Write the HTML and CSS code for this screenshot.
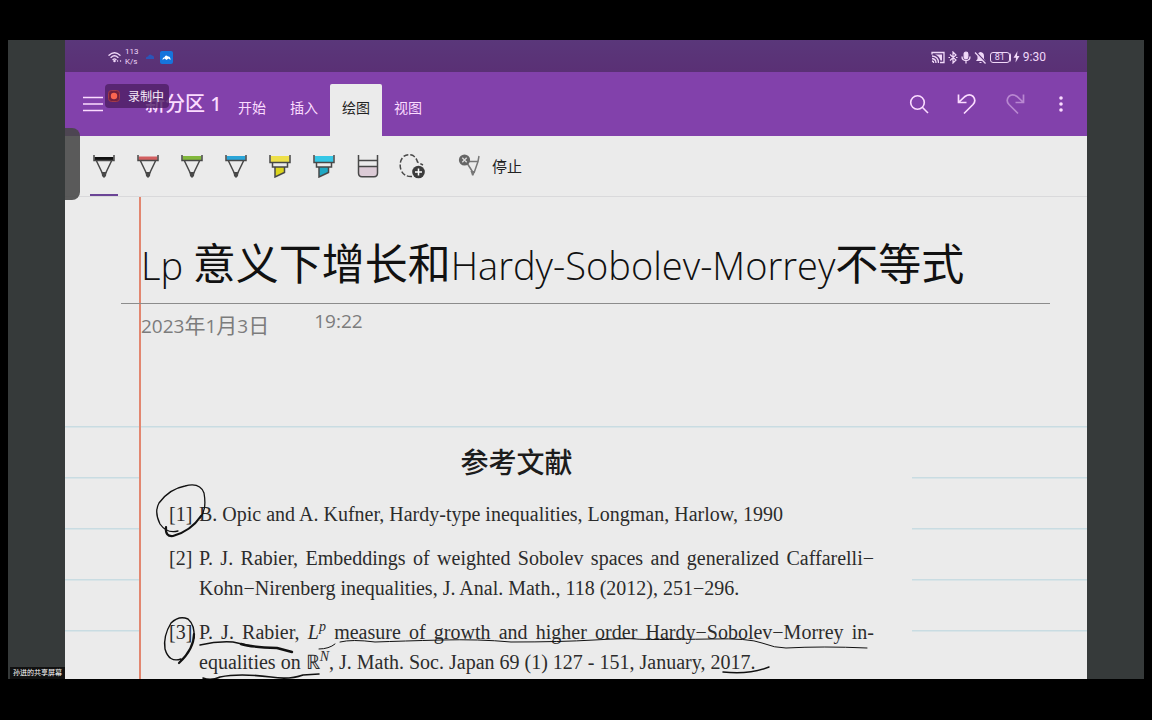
FILE: index.html
```html
<!DOCTYPE html>
<html lang="zh-CN">
<head>
<meta charset="utf-8">
<title>新分区 1</title>
<link rel="stylesheet" href="styles.css">
</head>
<body>
<div class="stage">
  <div class="sharer">孙进的共享屏幕</div>
  <main class="app">
    <div class="status">
      <svg class="wifi" width="14" height="12" viewBox="0 0 14 12" fill="none" stroke="#f0d8f8" stroke-width="1.3" stroke-linecap="round"><path d="M1 4.2Q6.500 -.8 12 4.200M3 6.400Q6.500 3.200 10 6.400M5 8.500Q6.500 7.200 8 8.500"/><circle cx="6.500" cy="10" r=".6" fill="#f0d8f8"/><path d="M9.500 10h.1M12.500 10h.1"/></svg>
      <span class="speed">113<br>K/s</span>
      <svg class="cloud" width="10" height="8" viewBox="0 0 10 8"><path d="M1 6Q.5 3.500 3 3.500Q4.500 0 7 2.500Q9.500 2.500 9 6Z" fill="#2b55b8"/></svg>
      <svg width="13" height="13" viewBox="0 0 13 13"><rect width="13" height="13" rx="2" fill="#1674dc"/><path d="M2.500 9Q2.500 6 4.500 6.200Q5.500 3 8 5.500Q10.500 5 10.500 9L8.500 7.500L6.500 9L4.500 7.500Z" fill="#fff"/></svg>
      <span class="spacer"></span>
      <svg width="14" height="13" viewBox="0 0 14 13" fill="none" stroke="#f0d8f8" stroke-width="1.300"><path d="M1 3.500V1.500H13V11.500H9M1 5Q7.500 5.500 7.500 12M1 7.500Q5 8 5 12M1 10Q2.700 10.300 2.700 12"/><path d="M4 3.500H11V9.500H9.500Q8.500 5 4 3.500Z" fill="#f0d8f8" stroke="none"/></svg>
      <svg width="10" height="13" viewBox="0 0 10 13" fill="none" stroke="#f0d8f8" stroke-width="1.200"><path d="M2 3.500L8 9L5 12V1L8 4L2 9.500M.5 6.500h1.500M8 6.500h1.500"/></svg>
      <svg width="10" height="13" viewBox="0 0 10 13" fill="none" stroke="#f0d8f8" stroke-width="1.300"><rect x="3.200" y="1.200" width="3.600" height="6.500" rx="1.800" fill="#f0d8f8"/><path d="M1 5.500Q1 9.500 5 9.500T9 5.500M5 9.500V12.500"/></svg>
      <svg width="13" height="13" viewBox="0 0 13 13"><path d="M6.500 1Q10 1.500 10 5V8L11.500 10H2L3.500 8V5Q3.500 1.500 6.500 1ZM5 11H8Q6.500 13 5 11Z" fill="#f0d8f8"/><path d="M1.500 1L12 12" stroke="#5a3278" stroke-width="2"/><path d="M1 1.500L11.500 12.500" stroke="#f0d8f8" stroke-width="1.200"/></svg>
      <span class="battery">81</span>
      <svg class="bolt" width="7" height="12" viewBox="0 0 7 12"><path d="M4.500 0L.5 6.700H3L2.500 11.500L6.500 5H4Z" fill="#f0d8f8"/></svg>
      <span class="clock">9:30</span>
    </div>

    <header class="bar">
      <button class="menu" aria-label="菜单"><svg width="20" height="16" viewBox="0 0 20 16" stroke="#fbdcff" stroke-width="1.600"><path d="M0 1.500H20M0 8H20M0 14.500H20"/></svg></button>
      <h2 class="section">新分区 1</h2>
      <nav class="tabs">
        <button class="tab">开始</button>
        <button class="tab">插入</button>
        <button class="tab active">绘图</button>
        <button class="tab">视图</button>
      </nav>
      <span class="spacer"></span>
      <button class="act" aria-label="搜索"><svg width="20" height="20" viewBox="0 0 20 20" fill="none" stroke="#fbdcff" stroke-width="1.600"><circle cx="8.500" cy="8.500" r="6.800"/><path d="M13.300 13.300L19 19"/></svg></button>
      <button class="act" aria-label="撤消"><svg width="20" height="22" viewBox="0 0 20 22" fill="none" stroke="#fbdcff" stroke-width="1.700"><path d="M1.500 1.500V9.500H9.500M1.500 9.500L8 3.500Q12.500 .2 16.200 3.500Q19.500 7.500 16 11.500L7 20.500"/></svg></button>
      <button class="act dim" aria-label="恢复"><svg width="20" height="22" viewBox="0 0 20 22" fill="none" stroke="#fbdcff" stroke-width="1.700"><path d="M18.500 1.500V9.500H10.500M18.500 9.500L12 3.500Q7.500 .2 3.800 3.500Q.5 7.500 4 11.500L13 20.500"/></svg></button>
      <button class="act more" aria-label="更多"><svg width="4" height="16" viewBox="0 0 4 16" fill="#fbdcff"><circle cx="2" cy="2" r="1.800"/><circle cx="2" cy="8" r="1.800"/><circle cx="2" cy="14" r="1.800"/></svg></button>
      <div class="recording"><svg width="12" height="12" viewBox="0 0 12 12"><rect x=".5" y=".5" width="11" height="11" rx="3" fill="#74213f" stroke="#a33a48"/><circle cx="6" cy="6" r="3.200" fill="#fb6650"/></svg>录制中</div>
    </header>

    <div class="tools">
      <button class="tool on" aria-label="黑色笔"><svg width="22" height="24" viewBox="0 0 22 24"><path d="M1.500 3H20.500V6H1.500Z" fill="#111"/><path d="M1 1V6.500H21V1M3.500 7L9.500 19.500M18.500 7L12.500 19.500" class="pen"/><path d="M8.500 18H13.500L13 22L11 24L9 22Z" fill="#484848"/></svg></button>
      <button class="tool" aria-label="红色笔"><svg width="22" height="24" viewBox="0 0 22 24"><path d="M1.500 2.500H20.500V6H1.500Z" fill="#d25f60"/><path d="M1 1V6.500H21V1M3.500 7L9.500 19.500M18.500 7L12.500 19.500" class="pen"/><path d="M8.500 18H13.500L13 22L11 24L9 22Z" fill="#484848"/></svg></button>
      <button class="tool" aria-label="绿色笔"><svg width="22" height="24" viewBox="0 0 22 24"><path d="M1.500 2H20.500V6H1.500Z" fill="#82b83c"/><path d="M1 1V6.500H21V1M3.500 7L9.500 19.500M18.500 7L12.500 19.500" class="pen"/><path d="M8.500 18H13.500L13 22L11 24L9 22Z" fill="#484848"/></svg></button>
      <button class="tool" aria-label="蓝色笔"><svg width="22" height="24" viewBox="0 0 22 24"><path d="M1.500 2H20.500V6H1.500Z" fill="#2aa5d8"/><path d="M1 1V6.500H21V1M3.500 7L9.500 19.500M18.500 7L12.500 19.500" class="pen"/><path d="M8.500 18H13.500L13 22L11 24L9 22Z" fill="#484848"/></svg></button>
      <button class="tool" aria-label="黄色荧光笔"><svg width="22" height="24" viewBox="0 0 22 24"><path d="M1.500 2H20.500V8.500H1.500Z" fill="#eee04a"/><path d="M6 13H16V18L6 23Z" fill="#dcd51c"/><path d="M1 1V8.500H21V1M3.500 8.500V13H18.500V8.500M6 13V23L15.500 18.500V13" class="pen"/></svg></button>
      <button class="tool" aria-label="青色荧光笔"><svg width="22" height="24" viewBox="0 0 22 24"><path d="M1.500 2H20.500V8.500H1.500Z" fill="#35c7e6"/><path d="M6 13H16V18L6 23Z" fill="#20a8c4"/><path d="M1 1V8.500H21V1M3.500 8.500V13H18.500V8.500M6 13V23L15.500 18.500V13" class="pen"/></svg></button>
      <button class="tool" aria-label="橡皮擦"><svg width="22" height="24" viewBox="0 0 22 24"><path d="M1.500 12.500H20.500V19Q20.500 22.500 17 22.500H5Q1.500 22.500 1.500 19Z" fill="#dccbd6"/><path d="M1.500 1V19Q1.500 22.700 5 22.700H17Q20.500 22.700 20.500 19V1M1.500 6.500H20.500M1.500 12.500H20.500" class="pen"/></svg></button>
      <button class="tool" aria-label="套索选择"><svg width="26" height="26" viewBox="0 0 26 26"><path d="M13 23.500Q5 24 2 17Q-.5 9 4.500 3.500Q9 .3 14 2.500Q17.500 5 18.500 9L24 12" class="pen" stroke-dasharray="5 2"/><circle cx="19.500" cy="19" r="6.300" fill="#3c3c3c"/><path d="M16 19H23M19.500 15.500V22.500" stroke="#fff" stroke-width="1.500"/></svg></button>
      <button class="stop"><svg width="24" height="24" viewBox="0 0 24 24"><path d="M11 8.500H20L21 3M9 10L15 19.500M20 8.500L16 20" fill="none" stroke="#777" stroke-width="1.500"/><path d="M12.500 18H17L15.500 22.500H14Z" fill="#777"/><circle cx="6.500" cy="7" r="5.600" fill="#666"/><path d="M4.300 4.800L8.700 9.200M8.700 4.800L4.300 9.200" stroke="#ddd" stroke-width="1.300"/></svg>停止</button>
    </div>

    <article class="page">
      <div class="heading">
        <h1><span class="latin">Lp</span> 意义下增长和<span class="latin">Hardy-Sobolev-Morrey</span>不等式</h1>
      </div>
      <div class="stamp"><span class="date"><span class="num">2023</span>年<span class="num">1</span>月<span class="num">3</span>日</span><time class="num">19:22</time></div>
      <section class="paper">
        <h3>参考文献</h3>
        <ol class="refs">
          <li><span class="no">[1]</span><p>B. Opic and A. Kufner, Hardy-type inequalities, Longman, Harlow, 1990</p></li>
          <li><span class="no">[2]</span><p><span class="full">P. J. Rabier, Embeddings of weighted Sobolev spaces and generalized Caffarelli−</span>Kohn−Nirenberg inequalities, J. Anal. Math., 118 (2012), 251−296.</p></li>
          <li><span class="no">[3]</span><p><span class="full">P. J. Rabier, <i>L<sup>p</sup></i> measure of growth and higher order Hardy−Sobolev−Morrey in-</span>equalities on ℝ<sup><i>N</i></sup>, J. Math. Soc. Japan 69 (1) 127 - 151, January, 2017.</p></li>
        </ol>
        <svg class="ink" width="772" height="252" viewBox="140 428 772 252" fill="none" stroke="#111" stroke-linecap="round" stroke-linejoin="round">
          <path stroke-width="1.300" d="M177 530Q166 533 159 523Q153 511 158 502Q168 488 184 485Q199 481 203 492Q206 509 199 517"/>
          <path stroke-width="2.200" d="M200 515Q190 530 172 535Q164 536 165 526"/>
          <path stroke-width="1.400" d="M180 658Q168 662 164 648Q162 635 170 622Q178 614 187 618Q194 624 193 637"/>
          <path stroke-width="2.200" d="M193 633Q193 648 178 662"/>
          <path stroke-width="1.400" d="M199 644Q216 640 232 641L250 645"/>
          <path stroke-width="2.400" d="M240 643Q249 646 276 647L291 651"/>
          <path stroke-width="1" d="M318 648Q328 648 334 643M339 641Q351 638 374 641Q402 640 440 639T510 641Q560 641 593 639T635 638T710 638Q748 637 761 642T785 647Q822 645 866 647"/>
          <path stroke-width="1.600" d="M202 677Q210 680 219 676Q238 672 270 676Q288 679 302 674L318 673"/>
          <path stroke-width="1.500" d="M722 671Q748 674 768 666"/>
        </svg>
      </section>
    </article>
    <div class="handle"></div>
  </main>
</div>
</body>
</html>
```

FILE: styles.css
```css
* { box-sizing: border-box; }

body {
  margin: 0;
  height: 100vh;
  padding: 40px 8px 41px;
  background: #000;
  font-family: "Noto Sans", "Noto Sans CJK SC", sans-serif;
  display: flex;
}

button {
  border: 0;
  padding: 0;
  background: none;
  color: inherit;
  font: inherit;
  display: flex;
  align-items: center;
  justify-content: center;
}

svg { display: block; flex: none; }
h1, h2, h3, p, ol { margin: 0; padding: 0; font-weight: 400; }

.stage {
  flex: 1;
  display: grid;
  grid-template-columns: 57px minmax(0, 1fr) 57px;
  background: #363a3a;
}

.sharer {
  align-self: end;
  justify-self: end;
  padding: 0 3px;
  background: #111;
  color: #fff;
  font-size: 7px;
  line-height: 12px;
  white-space: nowrap;
}

.app {
  position: relative;
  display: flex;
  flex-direction: column;
  min-height: 0;
  background: #ebebeb;
}

.spacer { flex: 1; }

.status {
  flex: none;
  height: 32px;
  padding: 2px 41px 0 43px;
  display: flex;
  align-items: center;
  gap: 3px;
  background: linear-gradient(#5a377a, #5a3075);
  color: #f0d8f8;
}

.speed { font: 8px/10px Roboto, sans-serif; width: 16px; }
.cloud { margin: 0 2px 0 1px; }

.battery {
  width: 20px;
  height: 11px;
  border: 1px solid #f0d8f8;
  border-radius: 3px;
  box-shadow: 2px 0 0 -1px #f0d8f8;
  font: 9px/9px Roboto, sans-serif;
  text-align: center;
}

.clock { font: 12px/16px Roboto, sans-serif; }

.bar {
  position: relative;
  flex: none;
  height: 64px;
  padding-right: 4px;
  display: flex;
  align-items: center;
  background: #8241ab;
  color: #fbdcff;
}

.menu { width: 56px; height: 48px; }

.section {
  width: 105px;
  padding-left: 24px;
  font-size: 20px;
  font-weight: 500;
  line-height: 24px;
  white-space: nowrap;
}

.tabs { display: flex; align-self: flex-end; }

.tab {
  width: 52px;
  height: 52px;
  padding-bottom: 6px;
  font-size: 14px;
}

.tab.active {
  background: #ebebeb;
  color: #222;
  border-radius: 2px 2px 0 0;
}

.act { width: 48px; height: 48px; }
.act.more { width: 44px; }
.dim { opacity: .45; }

.recording {
  position: absolute;
  left: 40px;
  top: 12px;
  height: 24px;
  padding: 0 5px 0 3px;
  display: flex;
  align-items: center;
  gap: 8px;
  border-radius: 4px;
  background: rgba(78, 30, 100, .8);
  color: #f6eaf8;
  font-size: 12px;
}

.tools {
  flex: none;
  height: 61px;
  padding-left: 17px;
  display: flex;
  border-bottom: 1px solid #d9d9db;
}

.tool {
  width: 44px;
  height: 60px;
}

.tool.on {
  background: linear-gradient(#6b4596, #6b4596) center bottom / 28px 2px no-repeat;
}

.pen { fill: none; stroke: #484848; stroke-width: 1.500; }

.stop {
  height: 58px;
  margin-left: 24px;
  gap: 10px;
  color: #222;
  font-size: 15px;
}

.page {
  flex: 1;
  min-height: 0;
  overflow: hidden;
  display: flex;
  flex-direction: column;
  background:
    linear-gradient(#e2866f, #e2866f) 74px 0 / 2px 100% no-repeat,
    repeating-linear-gradient(#c9dce2 0 1px, #d9e4e7 1px 2px, transparent 2px 51px) 0 229px / 100% 255px no-repeat,
    #ebebeb;
}

.heading {
  margin: 0 37px 0 56px;
  padding: 30px 0 0 20px;
  height: 107px;
  border-bottom: 1px solid #8c8c8c;
}

h1 {
  color: #111;
  font-family: "Noto Sans CJK SC", sans-serif;
  font-size: 43px;
  line-height: 68px;
  white-space: nowrap;
}

.latin {
  font-family: "Open Sans", sans-serif;
  font-weight: 300;
  font-size: 38px;
}

.stamp {
  height: 125px;
  padding: 5px 0 0 76px;
  display: flex;
  gap: 45px;
  align-items: flex-start;
  color: #7c7c7c;
  font-size: 21px;
  line-height: 24px;
}

.num { font-family: "Open Sans", sans-serif; font-size: 19px; }
.date { padding-top: 4px; }

.paper {
  position: relative;
  flex: 1;
  min-height: 0;
  margin: 0 175px 0 76px;
  padding: 13px 38px 0 28px;
  background: #ebebeb;
  color: #2c2c2c;
}

h3 {
  padding-right: 10px;
  color: #1c1c1c;
  font-size: 28px;
  font-weight: 500;
  line-height: 40px;
  text-align: center;
}

.refs {
  list-style: none;
  margin-top: 17px;
  font: 20px/30px "Liberation Serif", serif;
}

.refs li { display: flex; margin-bottom: 14px; }
.refs p { flex: 1; white-space: nowrap; }
.refs sup { font-size: 14px; line-height: 0; }
.no { width: 30px; }
.full { display: block; white-space: normal; text-align-last: justify; }

.ink { position: absolute; left: 0; top: 0; }

.handle {
  position: absolute;
  left: 0;
  top: 88px;
  width: 15px;
  height: 72px;
  border-radius: 0 8px 8px 0;
  background: rgba(70, 70, 70, .88);
}
```
